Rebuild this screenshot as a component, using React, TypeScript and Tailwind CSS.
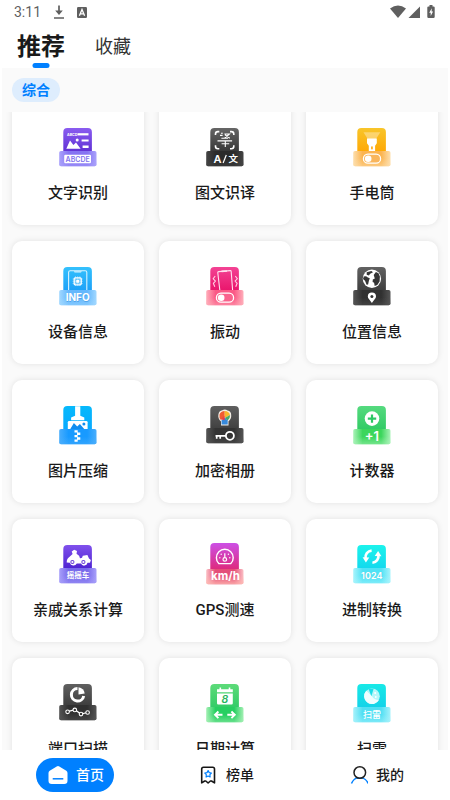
import { useState, type ReactNode } from "react";

type IconProps = {
  id: string;
  top: [string, string];
  plate: [string, string];
  plateY?: number;
  children: ReactNode;
};

/* Tile with a frosted name plate in front of its lower part */
function Tile({ id, top, plate, plateY = 23, children }: IconProps) {
  return (
    <svg viewBox="0 0 38 39" className="h-[39px] w-[38px] overflow-visible" aria-hidden="true">
      <defs>
        <linearGradient id={`${id}-t`} x1="0" y1="0" x2="0" y2="1">
          <stop offset="0" stopColor={top[0]} />
          <stop offset="1" stopColor={top[1]} />
        </linearGradient>
        <linearGradient id={`${id}-p`} x1="0" y1="0" x2="1" y2="0">
          <stop offset="0" stopColor={plate[0]} />
          <stop offset="0.25" stopColor={plate[1]} />
          <stop offset="0.75" stopColor={plate[1]} />
          <stop offset="1" stopColor={plate[0]} />
        </linearGradient>
        <linearGradient id={`${id}-f`} x1="0" y1="0" x2="0" y2="1">
          <stop offset="0.5" stopColor={plate[0]} stopOpacity="0" />
          <stop offset="1" stopColor={plate[0]} stopOpacity="0.5" />
        </linearGradient>
      </defs>
      <rect x="4.3" y="0" width="28.6" height="27" rx="4" fill={`url(#${id}-t)`} />
      <rect x="0.2" y={plateY} width="37.3" height="15.2" rx="1.8" fill={`url(#${id}-p)`} />
      <rect x="0.2" y={plateY} width="37.3" height="15.2" rx="1.8" fill={`url(#${id}-f)`} />
      {children}
    </svg>
  );
}

const latin = "font-['Inter','Roboto',sans-serif]";
const cjk = "font-['Noto_Sans_CJK_SC',sans-serif]";

function PlateToggle({ fill }: { fill: string }) {
  return (
    <g>
      <rect x="10.4" y="26.2" width="17.2" height="9" rx="4.5" fill={fill} stroke="#fff" strokeWidth="1.3" />
      <circle cx="15.2" cy="30.7" r="3.3" fill="#fff" />
    </g>
  );
}

const OcrIcon = () => (
  <Tile id="ocr" top={["#8a5cf0", "#5a2bd0"]} plate={["#aaa2fb", "#8574f2"]}>
    <text x="8" y="7.9" fontSize="3.6" fontWeight="700" fill="#fff" className={latin}>ABCD</text>
    <rect x="18.5" y="5.2" width="11" height="2.2" fill="#fff" />
    <path d="M7.3 20.8 11 12.4 14.4 17 17 14.4 21.6 20.8Z" fill="#fff" />
    <circle cx="18.2" cy="11.9" r="1.5" fill="#fff" />
    <path d="M22.6 11.4h7v2.2h-7zM23.6 17.6h6v2.4h-6z" fill="#fff" />
    <rect x="5.2" y="26.8" width="26.8" height="8.4" rx="1.2" fill="#fff" />
    <text x="18.7" y="33.6" fontSize="7" textAnchor="middle" fontWeight="600" fill="#8173ee" className={latin}>ABCDE</text>
  </Tile>
);

const TranslateIcon = () => (
  <Tile id="trans" top={["#666", "#303030"]} plate={["#444", "#2b2b2b"]}>
    <path d="M9.5 7V6q0-2.4 2.4-2.4h1.4M24 3.6h1.4q2.4 0 2.4 2.4v1M9.5 17.3v1q0 2.4 2.4 2.4h1.4M24 20.7h1.4q2.4 0 2.4-2.4v-1" fill="none" stroke="#fff" strokeWidth="1.6" />
    <path d="M14 7.4h2.6M15 5.2h1.8M18.4 6h5l-4.6 4M19 6.8l4.8 3.4M11.5 12.9h14.6M15.400 10.300h6.600M15.600 15.800h7.600M19.300 13v6" fill="none" stroke="#fff" strokeWidth="1.1" />
    <text x="7.4" y="34.7" fontSize="11" fontWeight="600" fill="#fff" className={latin}>A</text>
    <path d="m17.1 35 3.2-8" stroke="#fff" strokeWidth="1.2" />
    <text x="22.4" y="34.2" fontSize="9.5" fontWeight="700" fill="#fff" className={cjk}>文</text>
  </Tile>
);

const FlashlightIcon = () => (
  <Tile id="flash" top={["#f8c52a", "#ffa502"]} plate={["#fddfae", "#fbb450"]}>
    <path d="M10.5 4.3h16.8L23 11h-8.3Z" fill="#fff" opacity="0.35" />
    <path d="M14 10.5h9.8v4.7l-1.7 2.5v5.2h-6.3v-5.2L14 15.2Z" fill="#fff" />
    <rect x="18.1" y="18.2" width="1.7" height="3.3" rx="0.8" fill="#ffab12" />
    <PlateToggle fill="#f9b65d" />
  </Tile>
);

const InfoIcon = () => (
  <Tile id="info" top={["#34c1fd", "#199cf7"]} plate={["#a2d8ff", "#65b8fd"]}>
    <path d="M9.6 23V5.3q0-1.6 1.6-1.6h15q1.6 0 1.6 1.6V23" fill="none" stroke="#d8f2ff" strokeWidth="1.1" />
    <path d="M14.8 4.2h8l-.8 1.4h-6.4Z" fill="#d8f2ff" />
    <rect x="15.2" y="10.8" width="7" height="7" rx="1" fill="none" stroke="#fff" strokeWidth="1.3" />
    <rect x="17.2" y="12.8" width="3" height="3" fill="#fff" />
    <path d="M16.5 9v10M18.7 9v10M20.9 9v10M13.5 12h10.4M13.5 14.3h10.4M13.5 16.5h10.4" stroke="#fff" strokeWidth="0.5" opacity="0.7" />
    <text x="19" y="34.6" fontSize="10" textAnchor="middle" fontWeight="700" fill="#3d94de" opacity="0.6" className={latin}>INFO</text>
    <text x="18.7" y="34" fontSize="10" textAnchor="middle" fontWeight="700" fill="#fff" className={latin}>INFO</text>
  </Tile>
);

const VibrateIcon = () => (
  <Tile id="vib" top={["#f34394", "#e80f66"]} plate={["#ffafba", "#fa5986"]}>
    <path d="M13.8 23 11.8 5.7q-.1-1 .9-1.1l11.4-1q1-.1 1.1.9L26.6 23" fill="none" stroke="#ffe0ee" strokeWidth="1.1" />
    <path d="M15.5 4.400 21 4" stroke="#ffe0ee" strokeWidth="1.6" />
    <path d="m9.2 9-2 2.8 2.2 2.2-2 2.4 1.4 3.3M29.300 9l2 2.8-2.2 2.2 2 2.4-1.400 3.300" fill="none" stroke="#ffd3e4" strokeWidth="1.1" />
    <PlateToggle fill="#f9638d" />
  </Tile>
);

const LocationIcon = () => (
  <Tile id="loc" top={["#626262", "#393939"]} plate={["#555", "#303030"]}>
    <circle cx="18.9" cy="11.8" r="9.2" fill="#fff" />
    <path d="M10.8 9.4q2.6-.7 4 1.1l2 .8-.9 2.4-.8 3.8-1.5.3-1.6-4-2-1.7ZM13.7 5.2l4.7-1.3 1.6 1.3-2.8 1.6-1.3 1.6-2.2-.6ZM20.7 8l2.2-2.9 2.6 1.2 1.4 3.1-.3 5.2-2.3 3.5-2.6 1-.6-3.4-1.5-.8.2-2.3 2-1.2Z" fill="#353535" />
    <path d="M18.9 36c-2-2.7-4.1-4.6-4.1-6.4a4.1 4.1 0 0 1 8.2 0c0 1.8-2.1 3.7-4.1 6.4Z" fill="#fff" />
    <circle cx="18.9" cy="29.6" r="1.5" fill="#333" />
  </Tile>
);

const ZipIcon = () => (
  <Tile id="zip" top={["#06b9fc", "#08a7ff"]} plate={["#4aaefc", "#189aff"]}>
    <path d="M16.1.3h5.2v9.5l4 1.6v2.8H12.1v-2.8l4-1.6Z" fill="#fff" />
    <path d="M8.8 23v-6.7q0-1.4 1.4-1.4h17q1.4 0 1.4 1.4V23Z" fill="#fff" />
    <path d="m11.3 23 3.6-6 3.3 3.5 2.7-2.6 4.3 5.1Z" fill="#108df0" />
    <circle cx="24.9" cy="17.9" r="1.5" fill="#108df0" />
    <path d="M15.5 24.2h3.2v2.4h2.6V29h-2.6v2.3h2.6v2.4h-2.6v2.1h-3.2v-2.4h2.5v-2.1h-2.5V29H18v-2.4h-2.5Z" fill="#fff" />
  </Tile>
);

const AlbumIcon = () => (
  <Tile id="album" top={["#5f5f5f", "#3b3b3b"]} plate={["#555", "#333"]} plateY={22}>
    <path d="M15 19.6v-4q-3.4-3-2.6-7 .5-4 4-4.3 2.4-1.6 5.2.2 3.6.9 3.6 4.5.4 4-2.7 6.3v4.3Z" fill="#f4eee6" />
    <path d="M13.5 8.5q1.2-3.5 5.2-3.6v5.4l-3.8 3.8q-2-2-1.4-5.6Z" fill="#ef5b32" />
    <path d="M18.7 4.9q4.6.3 5.2 4l-5.2 3Z" fill="#f7b82c" />
    <path d="M24.1 9q.2 3.3-2.5 5.6l-2.9-2.7Z" fill="#48a969" />
    <path d="m15.6 14.2 3.1-2.4 3 2.5v4.2h-6.1Z" fill="#3689dc" />
    <path d="m14.9 13.3 3.8-3.6v4.5Z" fill="#e93d44" />
    <circle cx="23.9" cy="29.8" r="4" fill="none" stroke="#fff" strokeWidth="1.8" />
    <path d="M20 29.8H9.5M10.7 29.8v3M14.2 29.8v3" stroke="#fff" strokeWidth="1.7" />
  </Tile>
);

const CounterIcon = () => (
  <Tile id="count" top={["#55da7f", "#2dc961"]} plate={["#abf3b9", "#3bd65c"]}>
    <circle cx="19" cy="12.6" r="7.3" fill="#fff" />
    <path d="M19 8.4v8.4M14.8 12.6h8.4" stroke="#2dc764" strokeWidth="2.2" />
    <text x="18.9" y="35.2" fontSize="13" textAnchor="middle" fontWeight="600" fill="#fff" className={latin}>+1</text>
  </Tile>
);

const RideIcon = () => (
  <Tile id="ride" top={["#8051ec", "#471dce"]} plate={["#a8a0fa", "#786aeb"]}>
    <path d="M7.700 17.400q-.2-4 3.200-6l2.700-2.300-.9-2.700 2.500-1.700 2.800 1.300-.5 2.800 2.600 2 .9 2.500q2.400.3 2.800-2.500l4.600-.7 1.600 3.400 1.900 1.500-.9 2.800h-2.500a3.400 3.400 0 0 1-6.500.7h-4.200a3.800 3.800 0 0 1-7-.7Z" fill="#fff" />
    <circle cx="13.4" cy="17" r="2.1" fill="#6840d8" />
    <circle cx="13.4" cy="17" r="1.100" fill="#fff" />
    <circle cx="24.4" cy="17" r="2.1" fill="#6840d8" />
    <circle cx="24.4" cy="17" r="1.100" fill="#fff" />
    <text x="18.9" y="33.1" fontSize="7.5" textAnchor="middle" fontWeight="700" fill="#fff" className={cjk}>摇摇车</text>
  </Tile>
);

const SpeedIcon = () => (
  <svg viewBox="0 0 38 39" className="h-[39px] w-[38px] overflow-visible" aria-hidden="true">
    <defs>
      <linearGradient id="speed-t" x1="0" y1="0" x2="0" y2="1">
        <stop offset="0" stopColor="#cc50e6" />
        <stop offset="1" stopColor="#e0256f" />
      </linearGradient>
      <linearGradient id="speed-p" x1="0" y1="0" x2="1" y2="0">
        <stop offset="0" stopColor="#fbc0c5" />
        <stop offset="0.25" stopColor="#e44f79" />
        <stop offset="0.75" stopColor="#e44f79" />
        <stop offset="1" stopColor="#fbc0c5" />
      </linearGradient>
      <linearGradient id="speed-f" x1="0" y1="0" x2="0" y2="1">
        <stop offset="0.4" stopColor="#ffb8b0" stopOpacity="0" />
        <stop offset="1" stopColor="#ffb8b0" stopOpacity="0.8" />
      </linearGradient>
    </defs>
    <rect x="4.3" y="-2" width="28.6" height="30" rx="4" fill="url(#speed-t)" />
    <rect x="0.2" y="24" width="37.3" height="15.2" rx="1.8" fill="url(#speed-p)" />
    <rect x="0.2" y="24" width="37.3" height="15.2" rx="1.8" fill="url(#speed-f)" />
    <path d="M12.8 18.6a8.4 8.4 0 1 1 12 0Z" fill="none" stroke="#fff" strokeWidth="1.4" strokeLinejoin="round" />
    <circle cx="18.8" cy="14.4" r="1.8" fill="none" stroke="#fff" strokeWidth="1.2" />
    <path d="M18.8 12.5V8.2" stroke="#fff" strokeWidth="1.2" />
    <g fill="#fff">
      <circle cx="13.8" cy="12.8" r="0.7" />
      <circle cx="15.2" cy="9.2" r="0.7" />
      <circle cx="22.4" cy="9.2" r="0.7" />
      <circle cx="23.8" cy="12.8" r="0.7" />
    </g>
    <text x="19.4" y="35.2" fontSize="11.5" textAnchor="middle" fontWeight="700" fill="#fff" className={latin}>km/h</text>
  </svg>
);

const RadixIcon = () => (
  <Tile id="radix" top={["#1cf3ec", "#12d5ee"]} plate={["#a9f4fc", "#50e2f5"]}>
    <path d="M18.600 5.600a6.6 6.6 0 0 0-6 7.800" fill="none" stroke="#fff" strokeWidth="2.6" />
    <path d="m9.600 12.2 3.300 5.2 3.4-5Z" fill="#fff" />
    <path d="M19.400 17.700a6.6 6.6 0 0 0 6-7.8" fill="none" stroke="#fff" strokeWidth="2.6" />
    <path d="m28.4 11.2-3.3-5.2-3.4 5Z" fill="#fff" />
    <text x="19.2" y="34.4" fontSize="9" textAnchor="middle" fontWeight="700" fill="#15a6ba" opacity="0.5" className={latin}>1024</text>
    <text x="18.9" y="33.8" fontSize="9" textAnchor="middle" fontWeight="700" fill="#fff" className={latin}>1024</text>
  </Tile>
);

const PortIcon = () => (
  <Tile id="port" top={["#606060", "#353535"]} plate={["#555", "#303030"]} plateY={21}>
    <path d="M18.5 4.6a6.2 6.2 0 1 0 6.2 7.3" fill="none" stroke="#fff" strokeWidth="3" />
    <path d="M19.5 10.6V3.2a7.4 7.4 0 0 1 6.2 6.2Z" fill="#fff" />
    <path d="m8.8 27.7 7-2 6.2 4.4 6.2-1.6" fill="none" stroke="#fff" strokeWidth="1.2" />
    <g fill="#333" stroke="#fff" strokeWidth="1.1">
      <circle cx="8.6" cy="27.8" r="1.8" />
      <circle cx="15.8" cy="25.9" r="1.8" />
      <circle cx="22" cy="30.1" r="1.8" />
      <circle cx="28.6" cy="28.5" r="1.8" />
    </g>
  </Tile>
);

const DateIcon = () => (
  <Tile id="date" top={["#5ddb79", "#2dc965"]} plate={["#a4f0b4", "#27cf61"]}>
    <path d="M11 5.3h15.8v2.9H11zM11 9.5h15.8v9.8q0 1.3-1.3 1.3H12.3q-1.3 0-1.3-1.3Z" fill="#fff" />
    <path d="M14.3 3.5v3.4M23.5 3.5v3.4" stroke="#fff" strokeWidth="1.6" />
    <text x="18.9" y="18.8" fontSize="10.5" textAnchor="middle" fontStyle="italic" fontWeight="600" fill="#27b65c" className={latin}>8</text>
    <path d="M16.5 30.8H9M12.4 27.5 9 30.8l3.4 3.3M21.3 30.8h7.5M25.4 27.5l3.4 3.3-3.4 3.3" fill="none" stroke="#fff" strokeWidth="1.9" />
  </Tile>
);

const MineIcon = () => (
  <Tile id="mine" top={["#18e9e7", "#12cfe9"]} plate={["#a7f2fb", "#51dff3"]}>
    <circle cx="19" cy="12.3" r="7.8" fill="#b5f7fa" />
    <path d="M19 12.3 13.2 6.8a7.8 7.8 0 0 0 1.2 11.7 7.8 7.8 0 0 0 11.5-2.4A7.7 7.7 0 0 1 19 12.3Z" fill="#effeff" />
    <path d="m15.6 5 2.8 7.3 2.2-7.6Z" fill="#1bdde9" />
    <circle cx="22.2" cy="8.9" r="1" fill="#fff" />
    <circle cx="22.8" cy="13" r="0.9" fill="#fff" />
    <text x="18.9" y="34" fontSize="9" textAnchor="middle" fontWeight="500" fill="#fff" className={cjk}>扫雷</text>
  </Tile>
);

const tools = [
  { name: "文字识别", Icon: OcrIcon },
  { name: "图文识译", Icon: TranslateIcon },
  { name: "手电筒", Icon: FlashlightIcon },
  { name: "设备信息", Icon: InfoIcon },
  { name: "振动", Icon: VibrateIcon },
  { name: "位置信息", Icon: LocationIcon },
  { name: "图片压缩", Icon: ZipIcon },
  { name: "加密相册", Icon: AlbumIcon },
  { name: "计数器", Icon: CounterIcon },
  { name: "亲戚关系计算", Icon: RideIcon },
  { name: "GPS测速", Icon: SpeedIcon },
  { name: "进制转换", Icon: RadixIcon },
  { name: "端口扫描", Icon: PortIcon },
  { name: "日期计算", Icon: DateIcon },
  { name: "扫雷", Icon: MineIcon },
];

function StatusBar() {
  return (
    <div className="flex h-6 shrink-0 items-center justify-between px-3.5 text-[#5f5f5f]">
      <div className="flex items-center">
        <span className="text-sm leading-6">3:11</span>
        <svg viewBox="0 0 12 14" className="ml-3 h-3.5 w-3" fill="none" stroke="currentColor" aria-hidden="true">
          <path d="M6 .5v7M1 13h10" strokeWidth="1.7" />
          <path d="M2.2 5.5h7.6L6 10Z" fill="currentColor" stroke="none" />
        </svg>
        <svg viewBox="0 0 10 11" className="ml-3 h-[11px] w-2.5" aria-hidden="true">
          <rect width="10" height="11" rx="1.2" fill="currentColor" />
          <path d="M2.4 8.8 5 2.4l2.6 6.4M3.3 6.8h3.4" fill="none" stroke="#fff" strokeWidth="1.3" />
        </svg>
      </div>
      <svg viewBox="0 0 46 14" className="h-3.5 w-[46px]" fill="currentColor" aria-hidden="true">
        <path d="M0 3.4Q8-2.4 16 3.4L8 13Z" />
        <path d="M18.5 13 30 1.6V13Z" />
        <path d="M39.5 0h3v1.4h1q1.2 0 1.2 1.2v9.2q0 1.2-1.2 1.2h-5q-1.2 0-1.2-1.2V2.6q0-1.2 1.2-1.2h1Z" />
        <path d="m41.8 3.2-2.6 4.6h1.5V11l2.4-4.4h-1.5Z" fill="#fff" />
      </svg>
    </div>
  );
}

const HomeGlyph = () => (
  <svg viewBox="0 0 20 20" className="size-5" aria-hidden="true">
    <path d="M8.7 1.5q1.3-.8 2.6 0l7 4.2q1.2.8 1.2 2.2v7.8q0 3.3-3.3 3.3H3.8Q.5 19 .5 15.7V7.9q0-1.4 1.2-2.2Z" fill="#fff" />
    <path d="M4.7 13.8h10.6" stroke="#0080ff" strokeWidth="1.5" />
  </svg>
);

const RankGlyph = () => (
  <svg viewBox="0 0 20 20" className="size-5" fill="none" aria-hidden="true">
    <path d="M3.7 17.9V4q0-1.8 1.8-1.8h9.2q1.8 0 1.8 1.8v13.9l-3-1.9h-1.1L10.1 18l-2.3-2H6.7Z" stroke="#161616" strokeWidth="1.6" strokeLinejoin="round" />
    <path d="m10.1 5.600 1.1 2 2.2.4-1.5 1.7.2 2.3-2-1-2 1 .2-2.300L6.800 8l2.200-.4Z" stroke="#0080ff" strokeWidth="1.2" strokeLinejoin="round" />
  </svg>
);

const MeGlyph = () => (
  <svg viewBox="0 0 20 20" className="size-5" fill="none" aria-hidden="true">
    <path d="M3.5 18.5q1.8-4.400 5.700-5.600 2.600.9 5.200 0 3.900 1.200 5.700 5.600" stroke="#0080ff" strokeWidth="1.5" />
    <circle cx="11.8" cy="7.500" r="5.800" stroke="#222" strokeWidth="1.5" />
  </svg>
);

const pages = [
  { name: "首页", Glyph: HomeGlyph },
  { name: "榜单", Glyph: RankGlyph },
  { name: "我的", Glyph: MeGlyph },
];

export default function App() {
  const [page, setPage] = useState("首页");
  return (
    <div className="flex h-screen flex-col overflow-hidden bg-white font-['Roboto','Noto_Sans_CJK_SC',sans-serif] text-[#1a1a1a]">
      <StatusBar />
      <header className="flex h-11 shrink-0 items-start gap-[30px] pl-[17px]">
        <button className="relative h-11 text-2xl font-bold leading-[46px]">
          推荐
          <span className="absolute bottom-0 left-1/2 h-[5px] w-[17px] -translate-x-1/2 rounded-full bg-[#0080ff]" />
        </button>
        <button className="h-11 text-lg leading-[46px] text-[#333]">收藏</button>
      </header>

      <main className="mx-0.5 flex min-h-0 flex-1 flex-col bg-[#fafafa]">
        <div className="flex h-11 shrink-0 items-center px-2.5">
          <button className="h-6 rounded-full bg-[#deedfd] px-2.5 text-sm font-bold leading-6 text-[#0080ff]">综合</button>
        </div>
        <div className="min-h-0 flex-1 overflow-hidden px-2.5">
          <div className="-mt-2.5 grid grid-cols-3 gap-x-[15px] gap-y-4">
            {tools.map(({ name, Icon }) => (
              <button
                key={name}
                className="flex h-[123px] flex-col items-center rounded-[10px] bg-white pt-[26px] shadow-[0_0_6px_rgba(0,0,0,0.1)]"
              >
                <Icon />
                <span className="mt-4 text-[15px] font-medium leading-5">{name}</span>
              </button>
            ))}
          </div>
        </div>
      </main>

      <nav className="flex h-[50px] shrink-0 items-center justify-around">
        {pages.map(({ name, Glyph }) => (
          <button
            key={name}
            onClick={() => setPage(name)}
            className={
              page === name
                ? "flex h-[34px] items-center gap-2 rounded-full bg-[#0080ff] pl-3 pr-2.5 text-sm font-medium text-white"
                : "flex h-[34px] items-center gap-2 rounded-full pl-3 pr-2.5 text-sm font-medium"
            }
          >
            <Glyph />
            {name}
          </button>
        ))}
      </nav>
    </div>
  );
}
